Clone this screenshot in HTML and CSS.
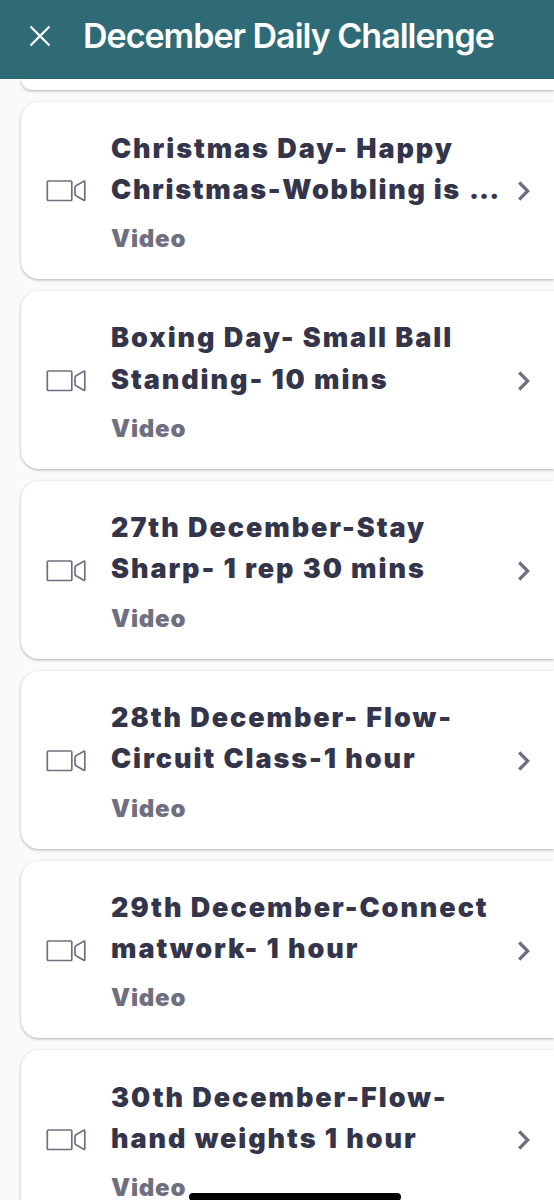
FILE: index.html
```
<!DOCTYPE html>
<html lang="en">
<head>
<meta charset="utf-8">
<title>December Daily Challenge</title>
<link rel="stylesheet" href="styles.css">
</head>
<body>
<svg class="defs" aria-hidden="true">
<symbol id="video" viewBox="0 0 42 26"><path d="M3.300 3h22.500q1 0 1 1v17.500q0 1-1 1H3.300q-1 0-1-1V4q0-1 1-1zM39.800 3.800v18q0 1-1 .5l-7.800-4.500q-1-.7-1-1.800v-6.400q0-1.100 1-1.800l7.800-4.500q1-.5 1 .5z"/></symbol>
<symbol id="chev" viewBox="0 0 14 20"><path d="M2.200 1.500l8.500 8.500-8.500 8.500"/></symbol>
</svg>
<header class="bar"><svg class="close" viewBox="0 0 24 24"><path d="M2.500 2.500l19 19M21.500 2.500l-19 19"/></svg><h1>December Daily Challenge</h1></header>
<main class="list">
<article class="card previous"></article>
<article class="card"><svg class="video"><use href="#video"/></svg><div class="copy"><h2>Christmas Day- Happy<br><span class="clipped">Christmas-Wobbling is <span class="dots">...</span></span></h2><p>Video</p></div><svg class="chev"><use href="#chev"/></svg></article>
<article class="card"><svg class="video"><use href="#video"/></svg><div class="copy"><h2>Boxing Day- Small Ball<br>Standing- 10 mins</h2><p>Video</p></div><svg class="chev"><use href="#chev"/></svg></article>
<article class="card"><svg class="video"><use href="#video"/></svg><div class="copy"><h2>27th December-Stay<br>Sharp- 1 rep 30 mins</h2><p>Video</p></div><svg class="chev"><use href="#chev"/></svg></article>
<article class="card"><svg class="video"><use href="#video"/></svg><div class="copy"><h2>28th December- Flow-<br>Circuit Class-1 hour</h2><p>Video</p></div><svg class="chev"><use href="#chev"/></svg></article>
<article class="card"><svg class="video"><use href="#video"/></svg><div class="copy"><h2>29th December-Connect<br>matwork- 1 hour</h2><p>Video</p></div><svg class="chev"><use href="#chev"/></svg></article>
<article class="card"><svg class="video"><use href="#video"/></svg><div class="copy"><h2>30th December-Flow-<br>hand weights 1 hour</h2><p>Video</p></div><svg class="chev"><use href="#chev"/></svg></article>
</main>
<div class="home"></div>
</body>
</html>
```
FILE: styles.css
```
* { box-sizing: border-box; }
body { margin: 0; height: 1200px; overflow: hidden; background: #fafafa; font-family: Inter, sans-serif; position: relative; }
.defs { position: absolute; width: 0; height: 0; }
svg { fill: none; stroke: #706f80; flex: none; }
.bar { height: 79px; background: #2f6b77; display: flex; align-items: center; padding: 0 0 7px 28px; }
.close { width: 24px; height: 24px; stroke: #fff; stroke-width: 2.200; }
h1 { margin: 0 0 0 31px; color: #fff; font-size: 34px; line-height: 40px; font-weight: 600; letter-spacing: -1px; white-space: nowrap; }
.list { display: flex; flex-direction: column; gap: 12px; padding-left: 21px; }
.card { height: 177.800px; flex: none; background: #fff; border-radius: 18px 0 0 18px; box-shadow: 0 1px 3px rgba(0,0,0,.3); display: flex; align-items: center; padding: 2px 0 0 24px; }
.previous { height: 10.500px; border-radius: 0 0 0 18px; }
.video { width: 42px; height: 26px; stroke-width: 1.700; }
.copy { width: 405px; margin-left: 24px; padding-top: 2px; white-space: nowrap; }
h2 { margin: 0; color: #34354a; font-size: 27px; line-height: 41.300px; font-weight: 900; letter-spacing: 1.930px; }
.clipped { letter-spacing: 1.700px; }
.dots { margin-left: 1px; letter-spacing: 0; }
p { margin: 11px 0 0; color: #706f80; font-size: 24px; line-height: 36px; font-weight: 900; letter-spacing: .8px; }
.chev { width: 14px; height: 20px; margin-left: 1px; stroke-width: 3.200; }
.home { position: absolute; left: 189px; top: 1193px; width: 212px; height: 8px; border-radius: 4px; background: #000; }
```
